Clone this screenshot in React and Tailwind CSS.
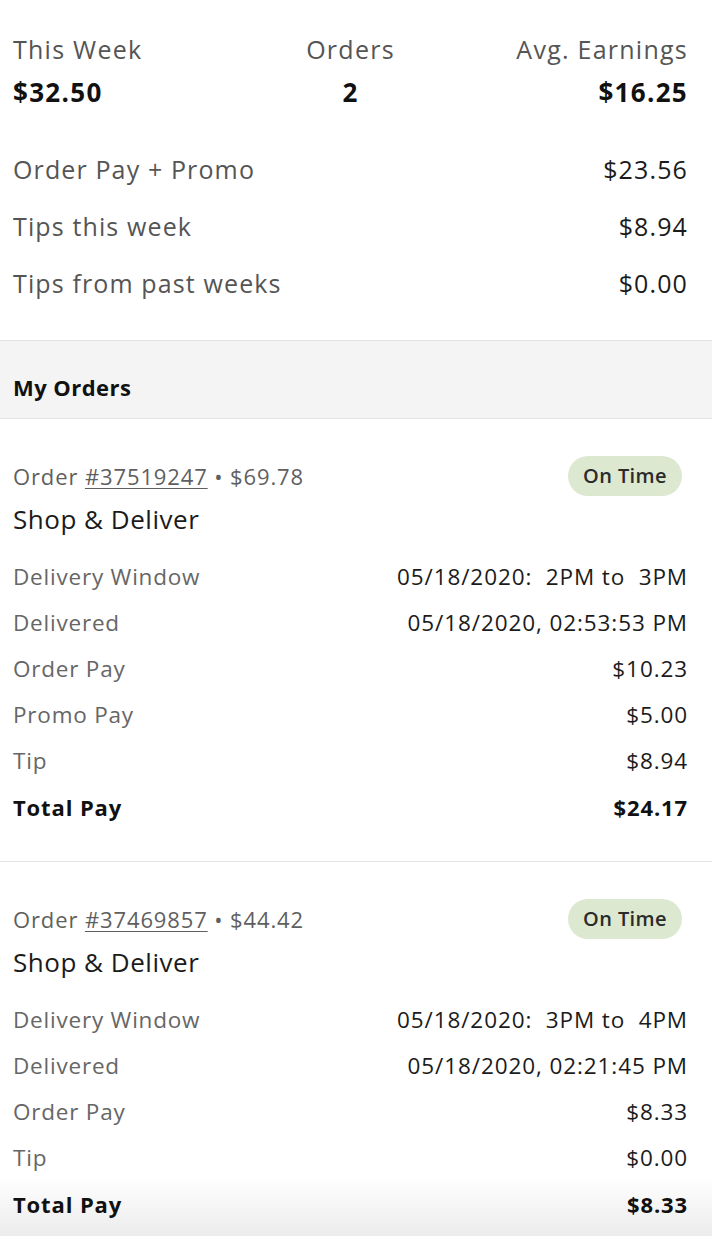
import React from "react";

const summaryRows = [
  ["Order Pay + Promo", "$23.56"],
  ["Tips this week", "$8.94"],
  ["Tips from past weeks", "$0.00"],
];

const orders = [
  {
    id: "#37519247",
    amount: "$69.78",
    rows: [
      ["Delivery Window", "05/18/2020:  2PM to  3PM"],
      ["Delivered", "05/18/2020, 02:53:53 PM"],
      ["Order Pay", "$10.23"],
      ["Promo Pay", "$5.00"],
      ["Tip", "$8.94"],
    ],
    total: "$24.17",
  },
  {
    id: "#37469857",
    amount: "$44.42",
    rows: [
      ["Delivery Window", "05/18/2020:  3PM to  4PM"],
      ["Delivered", "05/18/2020, 02:21:45 PM"],
      ["Order Pay", "$8.33"],
      ["Tip", "$0.00"],
    ],
    total: "$8.33",
  },
];

const OrderCard = ({ order }) => {
  return (
    <div className="border-b border-[#e3e3e3] pl-[13px] pr-[24px] pt-[37px] pb-[31px]">
      {/* order header */}
      <div className="h-[40px] flex justify-between items-center">
        <p className="text-[22px] leading-[30px] tracking-[0.04em] text-[#5f5f5f]">
          Order <span className="underline underline-offset-[3px] decoration-1">{order.id}</span> • {order.amount}
        </p>
        <span className="mr-[6px] h-[40px] px-[15px] rounded-full bg-[#dde8d0] flex items-center text-[20px] tracking-[0.02em] font-semibold text-[#2b2b2b]">
          On Time
        </span>
      </div>
      <h3 className="mt-[7px] text-[26px] leading-[32px] tracking-[0.02em] text-[#1b1b1b]">Shop &amp; Deliver</h3>

      {/* order rows */}
      <div className="mt-[19px]">
        {order.rows.map(([label, value]) => (
          <div key={label} className="h-[46px] flex justify-between items-center text-[22.5px] tracking-[0.035em]">
            <span className="text-[#666666]">{label}</span>
            <span className="text-[#1b1b1b] whitespace-pre tracking-[0.04em]">{value}</span>
          </div>
        ))}
        <div className="h-[46px] flex justify-between items-center text-[22px] tracking-[0.04em] font-bold text-[#111]">
          <span>Total Pay</span>
          <span>{order.total}</span>
        </div>
      </div>
    </div>
  );
};

const App = () => {
  return (
    <div className="relative w-[712px] bg-white font-['Open_Sans',sans-serif]">
      {/* week summary */}
      <div className="pl-[13px] pr-[24px] pt-[32px] pb-[28px]">
        <div className="grid grid-cols-3 text-[25px] leading-[34px] tracking-[0.05em]">
          <span className="text-[#555555]">This Week</span>
          <span className="text-center text-[#555555]">Orders</span>
          <span className="text-right text-[#555555]">Avg. Earnings</span>
        </div>
        <div className="mt-[9px] grid grid-cols-3 text-[26px] leading-[34px] tracking-[0.05em] font-bold text-[#111]">
          <span>$32.50</span>
          <span className="text-center">2</span>
          <span className="text-right">$16.25</span>
        </div>
        <div className="mt-[32px]">
          {summaryRows.map(([label, value]) => (
            <div key={label} className="h-[57px] flex justify-between items-center text-[25px] tracking-[0.045em]">
              <span className="text-[#555555]">{label}</span>
              <span className="text-[#1b1b1b]">{value}</span>
            </div>
          ))}
        </div>
      </div>

      {/* my orders heading */}
      <div className="border-y border-[#e2e2e2] bg-[#f4f4f4] pl-[13px] pt-[32px] pb-[17px]">
        <h2 className="text-[22px] leading-[28px] tracking-[0.02em] font-bold text-[#111]">My Orders</h2>
      </div>

      {orders.map((order) => (
        <OrderCard key={order.id} order={order} />
      ))}

      {/* bottom fade */}
      <div className="fixed left-0 bottom-0 w-[712px] h-[60px] pointer-events-none mix-blend-multiply bg-gradient-to-b from-white to-[#ececec]" />
    </div>
  );
};

export default App;
